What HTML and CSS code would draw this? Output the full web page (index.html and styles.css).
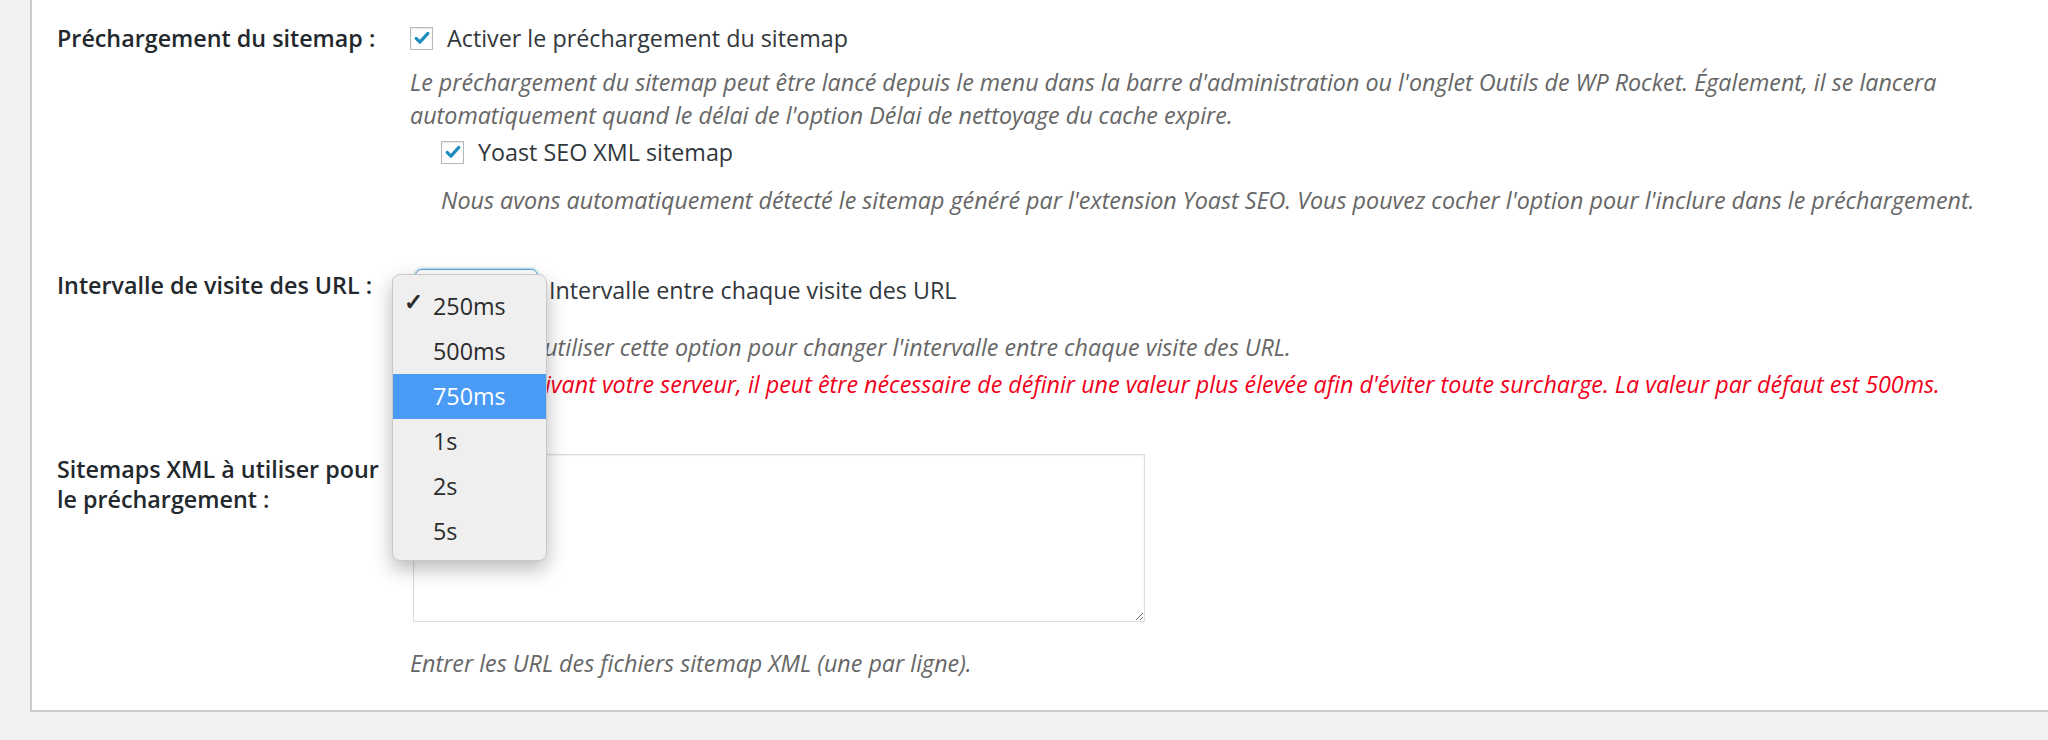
FILE: index.html
```html
<!DOCTYPE html>
<html lang="fr">

<head>
    <meta charset="UTF-8">
    <meta name="viewport" content="width=device-width, initial-scale=1.0">
    <title>Préchargement</title>
    <link rel="stylesheet" href="styles.css">
</head>

<body>
    <div class="panel">
        <!-- préchargement du sitemap -->
        <div class="row row-sitemap">
            <div class="row-label">Préchargement du sitemap :</div>
            <div class="field">
                <label class="check-line">
                    <span class="checkbox on">
                        <svg viewBox="0 0 24 24"><path d="M5 12.5l4.5 4.5L19 6.5" /></svg>
                    </span>
                    Activer le préchargement du sitemap
                </label>
                <p class="desc desc-first">Le préchargement du sitemap peut être lancé depuis le menu dans la barre d'administration ou l'onglet Outils de WP Rocket. Également, il se lancera automatiquement quand le délai de l'option Délai de nettoyage du cache expire.</p>
                <div class="sub">
                    <label class="check-line">
                        <span class="checkbox on">
                            <svg viewBox="0 0 24 24"><path d="M5 12.5l4.5 4.5L19 6.5" /></svg>
                        </span>
                        Yoast SEO XML sitemap
                    </label>
                    <p class="desc desc-yoast">Nous avons automatiquement détecté le sitemap généré par l'extension Yoast SEO. Vous pouvez cocher l'option pour l'inclure dans le préchargement.</p>
                </div>
            </div>
        </div>

        <!-- intervalle -->
        <div class="row row-interval">
            <div class="row-label">Intervalle de visite des URL :</div>
            <div class="field">
                <div class="select-line">
                    <div class="select-wrap">
                        <div class="select">250ms</div>
                        <ul class="menu">
                            <li class="checked">250ms</li>
                            <li>500ms</li>
                            <li class="hover">750ms</li>
                            <li>1s</li>
                            <li>2s</li>
                            <li>5s</li>
                        </ul>
                    </div>
                    <span class="select-text">Intervalle entre chaque visite des URL</span>
                </div>
                <p class="desc desc-interval">Vous pouvez utiliser cette option pour changer l'intervalle entre chaque visite des URL.</p>
                <p class="desc warning">Attention : suivant votre serveur, il peut être nécessaire de définir une valeur plus élevée afin d'éviter toute surcharge. La valeur par défaut est 500ms.</p>
            </div>
        </div>

        <!-- sitemaps -->
        <div class="row row-xml">
            <div class="row-label label-2lines">Sitemaps XML à utiliser pour le préchargement :</div>
            <div class="field">
                <textarea class="sitemaps"></textarea>
                <p class="desc desc-xml">Entrer les URL des fichiers sitemap XML (une par ligne).</p>
            </div>
        </div>
    </div>
</body>

</html>
```

FILE: styles.css
```css
body {
    margin: 0;
    background: #f1f1f1;
    font-family: "Open Sans", "Liberation Sans", sans-serif;
    font-size: 23.3px;
    color: #32373c;
}

.panel {
    margin-left: 30px;
    background: #fff;
    border-left: 2px solid #ccc;
    border-bottom: 2px solid #ccc;
    padding: 22px 0 30px 25px;
}

.row {
    display: grid;
    grid-template-columns: 353px 1fr;
}

.row-label {
    font-weight: 600;
    color: #23282d;
    line-height: 32px;
}

.label-2lines {
    line-height: 30px;
    width: 330px;
}

.field p {
    margin: 0;
}

.check-line {
    display: flex;
    align-items: center;
    gap: 14px;
    line-height: 32px;
    color: #32373c;
}

.checkbox {
    width: 23px;
    height: 23px;
    box-sizing: border-box;
    border: 1px solid #b4b9be;
    background: #fff;
    box-shadow: inset 0 1px 2px rgba(0, 0, 0, 0.1);
    display: flex;
    align-items: center;
    justify-content: center;
}

.checkbox svg {
    width: 20px;
    height: 20px;
    fill: none;
    stroke: #1e8cbe;
    stroke-width: 3.8;
    stroke-linecap: round;
    stroke-linejoin: round;
}

.desc {
    font-style: italic;
    color: #666;
    font-size: 23.3px;
    line-height: 33px;
}

.desc-first {
    margin-top: 12px !important;
}

.sub {
    padding-left: 31px;
    padding-top: 4px;
}

.desc-yoast {
    margin-top: 16px !important;
}

.row-interval {
    margin-top: 52px;
}

.select-line {
    display: flex;
    align-items: center;
    gap: 11px;
}

.select-wrap {
    position: relative;
    margin-left: 5px;
}

.select {
    width: 123px;
    height: 42px;
    box-sizing: border-box;
    border: 1px solid #5b9dd9;
    border-radius: 7px;
    box-shadow: 0 0 3px rgba(30, 140, 190, 0.8);
    padding: 4px 12px;
    line-height: 32px;
}

.menu {
    position: absolute;
    left: -23px;
    top: 5px;
    z-index: 2;
    width: 155px;
    margin: 0;
    padding: 9px 0 6px;
    list-style: none;
    box-sizing: border-box;
    background: #efefef;
    border: 1px solid #c9c9c9;
    border-radius: 8px;
    box-shadow: 0 8px 20px rgba(0, 0, 0, 0.28);
}

.menu li {
    height: 45px;
    line-height: 45px;
    padding-left: 40px;
    color: #2b2b2b;
    position: relative;
}

.menu li.checked::before {
    content: "✓";
    position: absolute;
    left: 11px;
    top: -5px;
    font-size: 23px;
    font-weight: 600;
}

.menu li.hover {
    background: #4a9bf6;
    color: #fff;
}

.select-text {
    line-height: 32px;
}

.desc-interval {
    margin-top: 20px !important;
}

.warning {
    color: #f2001a;
    margin-top: 4px !important;
}

.row-xml {
    margin-top: 53px;
}

.sitemaps {
    display: block;
    width: 732px;
    height: 168px;
    margin: 0 0 0 3px;
    box-sizing: border-box;
    border: 1px solid #ddd;
    box-shadow: inset 0 1px 2px rgba(0, 0, 0, 0.07);
    font-family: inherit;
}

.desc-xml {
    margin-top: 25px !important;
}
```
